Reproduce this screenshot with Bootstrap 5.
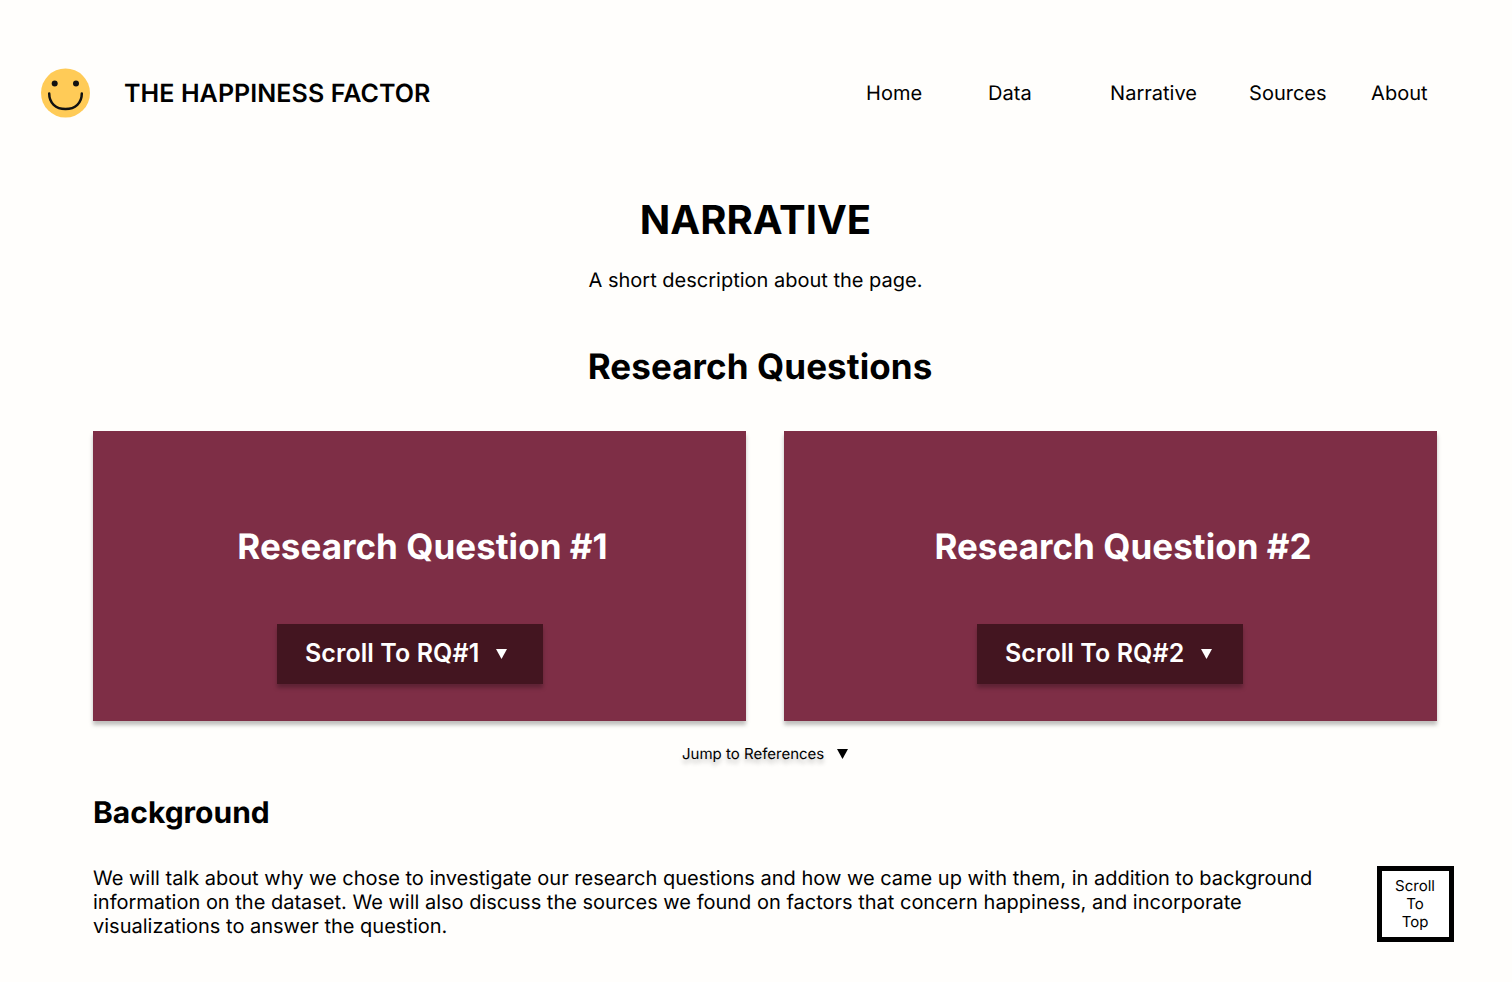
<!DOCTYPE html>
<html lang="en">
<head>
  <meta charset="UTF-8">
  <meta name="viewport" content="width=device-width, initial-scale=1">
  <title>The Happiness Factor</title>
  <link href="https://cdn.jsdelivr.net/npm/bootstrap@5.3.0/dist/css/bootstrap.min.css" rel="stylesheet">
  <style>
    body {
      font-family: Inter, "Liberation Sans", sans-serif;
      background-color: #fffefc;
      color: #000;
      height: 982px;
      overflow: hidden;
      text-rendering: geometricPrecision;
    }
    .site-head {
      padding: 68px 84.5px 0 41px;
      height: 118px;
    }
    .site-logo {
      width: 50px;
      height: 50px;
    }
    .site-title {
      font-size: 25px;
      font-weight: 600;
      margin-left: 33px;
      padding-top: 4px;
      letter-spacing: .08px;
    }
    .site-links a {
      font-size: 20px;
      color: #000;
      text-decoration: none;
      display: block;
    }
    .link-home { width: 122px; }
    .link-data { width: 122px; }
    .link-narr { width: 139px; }
    .link-src { width: 122px; }
    .page-title {
      font-size: 40px;
      font-weight: 700;
      margin: 78px 0 0;
      padding-right: 1px;
      line-height: 48px;
    }
    .page-desc {
      font-size: 20px;
      line-height: 24px;
      margin: 24px 0 0;
      padding-right: 1px;
    }
    .rq-heading {
      font-size: 35px;
      font-weight: 700;
      line-height: 42px;
      margin: 54px 0 0;
      padding-left: 8px;
      letter-spacing: .08px;
    }
    .rq-row {
      margin: 43px 75px 0 93px;
      gap: 38px;
    }
    .rq-box {
      width: 653px;
      height: 290px;
      background: #7e2e46;
      color: #fff;
      box-shadow: 0 4px 4px rgba(0,0,0,.25);
      padding-top: 95px;
    }
    .rq-box h3 {
      font-size: 35px;
      font-weight: 700;
      line-height: 42px;
      margin: 0;
      letter-spacing: .03px;
    }
    .rq-one h3 { padding-left: 6px; }
    .rq-two h3 { padding-left: 25px; }
    .rq-btn {
      display: flex;
      align-items: center;
      width: 266px;
      height: 60px;
      margin-top: 56px;
      padding: 0 0 0 28px;
      background: #431520;
      color: #fff;
      border: 0;
      border-radius: 0;
      font-size: 25px;
      font-weight: 600;
      letter-spacing: .08px;
      box-shadow: 0 4px 4px rgba(0,0,0,.25);
    }
    .rq-btn:hover { background: #431520; color: #fff; }
    .rq-one .rq-btn { margin-left: 184px; }
    .rq-two .rq-btn { margin-left: 193px; }
    .rq-btn svg { margin-left: 16.5px; }
    .jump-row {
      font-size: 15px;
      line-height: 18px;
      margin-top: 24px;
      padding-left: 682px;
      text-shadow: 0 4px 4px rgba(0,0,0,.25);
    }
    .jump-row svg { margin-left: 13px; }
    .bg-heading {
      font-size: 30px;
      font-weight: 700;
      line-height: 36px;
      margin: 32px 0 0 93px;
    }
    .bg-text {
      font-size: 20px;
      line-height: 24px;
      margin: 35px 190px 0 93px;
    }
    .to-top {
      position: fixed;
      left: 1377px;
      top: 866px;
      width: 77px;
      height: 76px;
      border: 5px solid #000;
      background: #fff;
      font-size: 15px;
      line-height: 18px;
      text-align: center;
      padding-right: 1px;
    }
  </style>
</head>
<body>
  <header class="site-head d-flex justify-content-between align-items-center">
    <div class="d-flex align-items-center">
      <svg class="site-logo" viewBox="0 0 50 50">
        <circle cx="24.5" cy="25" r="24.5" fill="#ffcb57"/>
        <circle cx="13.700" cy="15.500" r="3" fill="#111"/>
        <circle cx="35" cy="15.500" r="3" fill="#111"/>
        <path d="M8.200 25.500c0 9.500 6.500 15.500 16.300 15.500s16.300-6 16.300-15.500" fill="none" stroke="#111" stroke-width="2.500" stroke-linecap="round"/>
      </svg>
      <span class="site-title">THE HAPPINESS FACTOR</span>
    </div>
    <nav class="site-links d-flex">
      <a class="link-home" href="#">Home</a>
      <a class="link-data" href="#">Data</a>
      <a class="link-narr" href="#">Narrative</a>
      <a class="link-src" href="#">Sources</a>
      <a href="#">About</a>
    </nav>
  </header>

  <main>
    <h1 class="page-title text-center">NARRATIVE</h1>
    <p class="page-desc text-center">A short description about the page.</p>
    <h2 class="rq-heading text-center">Research Questions</h2>

    <div class="rq-row d-flex">
      <div class="rq-box rq-one">
        <h3 class="text-center">Research Question #1</h3>
        <button class="btn rq-btn" type="button">Scroll To RQ#1
          <svg width="11" height="10" viewBox="0 0 11 10"><path d="M0 0h11L5.500 10z" fill="#fff"/></svg>
        </button>
      </div>
      <div class="rq-box rq-two">
        <h3 class="text-center">Research Question #2</h3>
        <button class="btn rq-btn" type="button">Scroll To RQ#2
          <svg width="11" height="10" viewBox="0 0 11 10"><path d="M0 0h11L5.500 10z" fill="#fff"/></svg>
        </button>
      </div>
    </div>

    <div class="jump-row d-flex align-items-center">
      <span>Jump to References</span>
      <svg width="11" height="10" viewBox="0 0 11 10"><path d="M0 0h11L5.500 10z" fill="#000"/></svg>
    </div>

    <h2 class="bg-heading">Background</h2>
    <p class="bg-text">We will talk about why we chose to investigate our research questions and how we came up with them, in addition to background information on the dataset. We will also discuss the sources we found on factors that concern happiness, and incorporate visualizations to answer the question.</p>
  </main>

  <div class="to-top d-flex align-items-center justify-content-center">Scroll<br>To<br>Top</div>

  <script src="https://cdn.jsdelivr.net/npm/bootstrap@5.3.0/dist/js/bootstrap.bundle.min.js"></script>
</body>
</html>
